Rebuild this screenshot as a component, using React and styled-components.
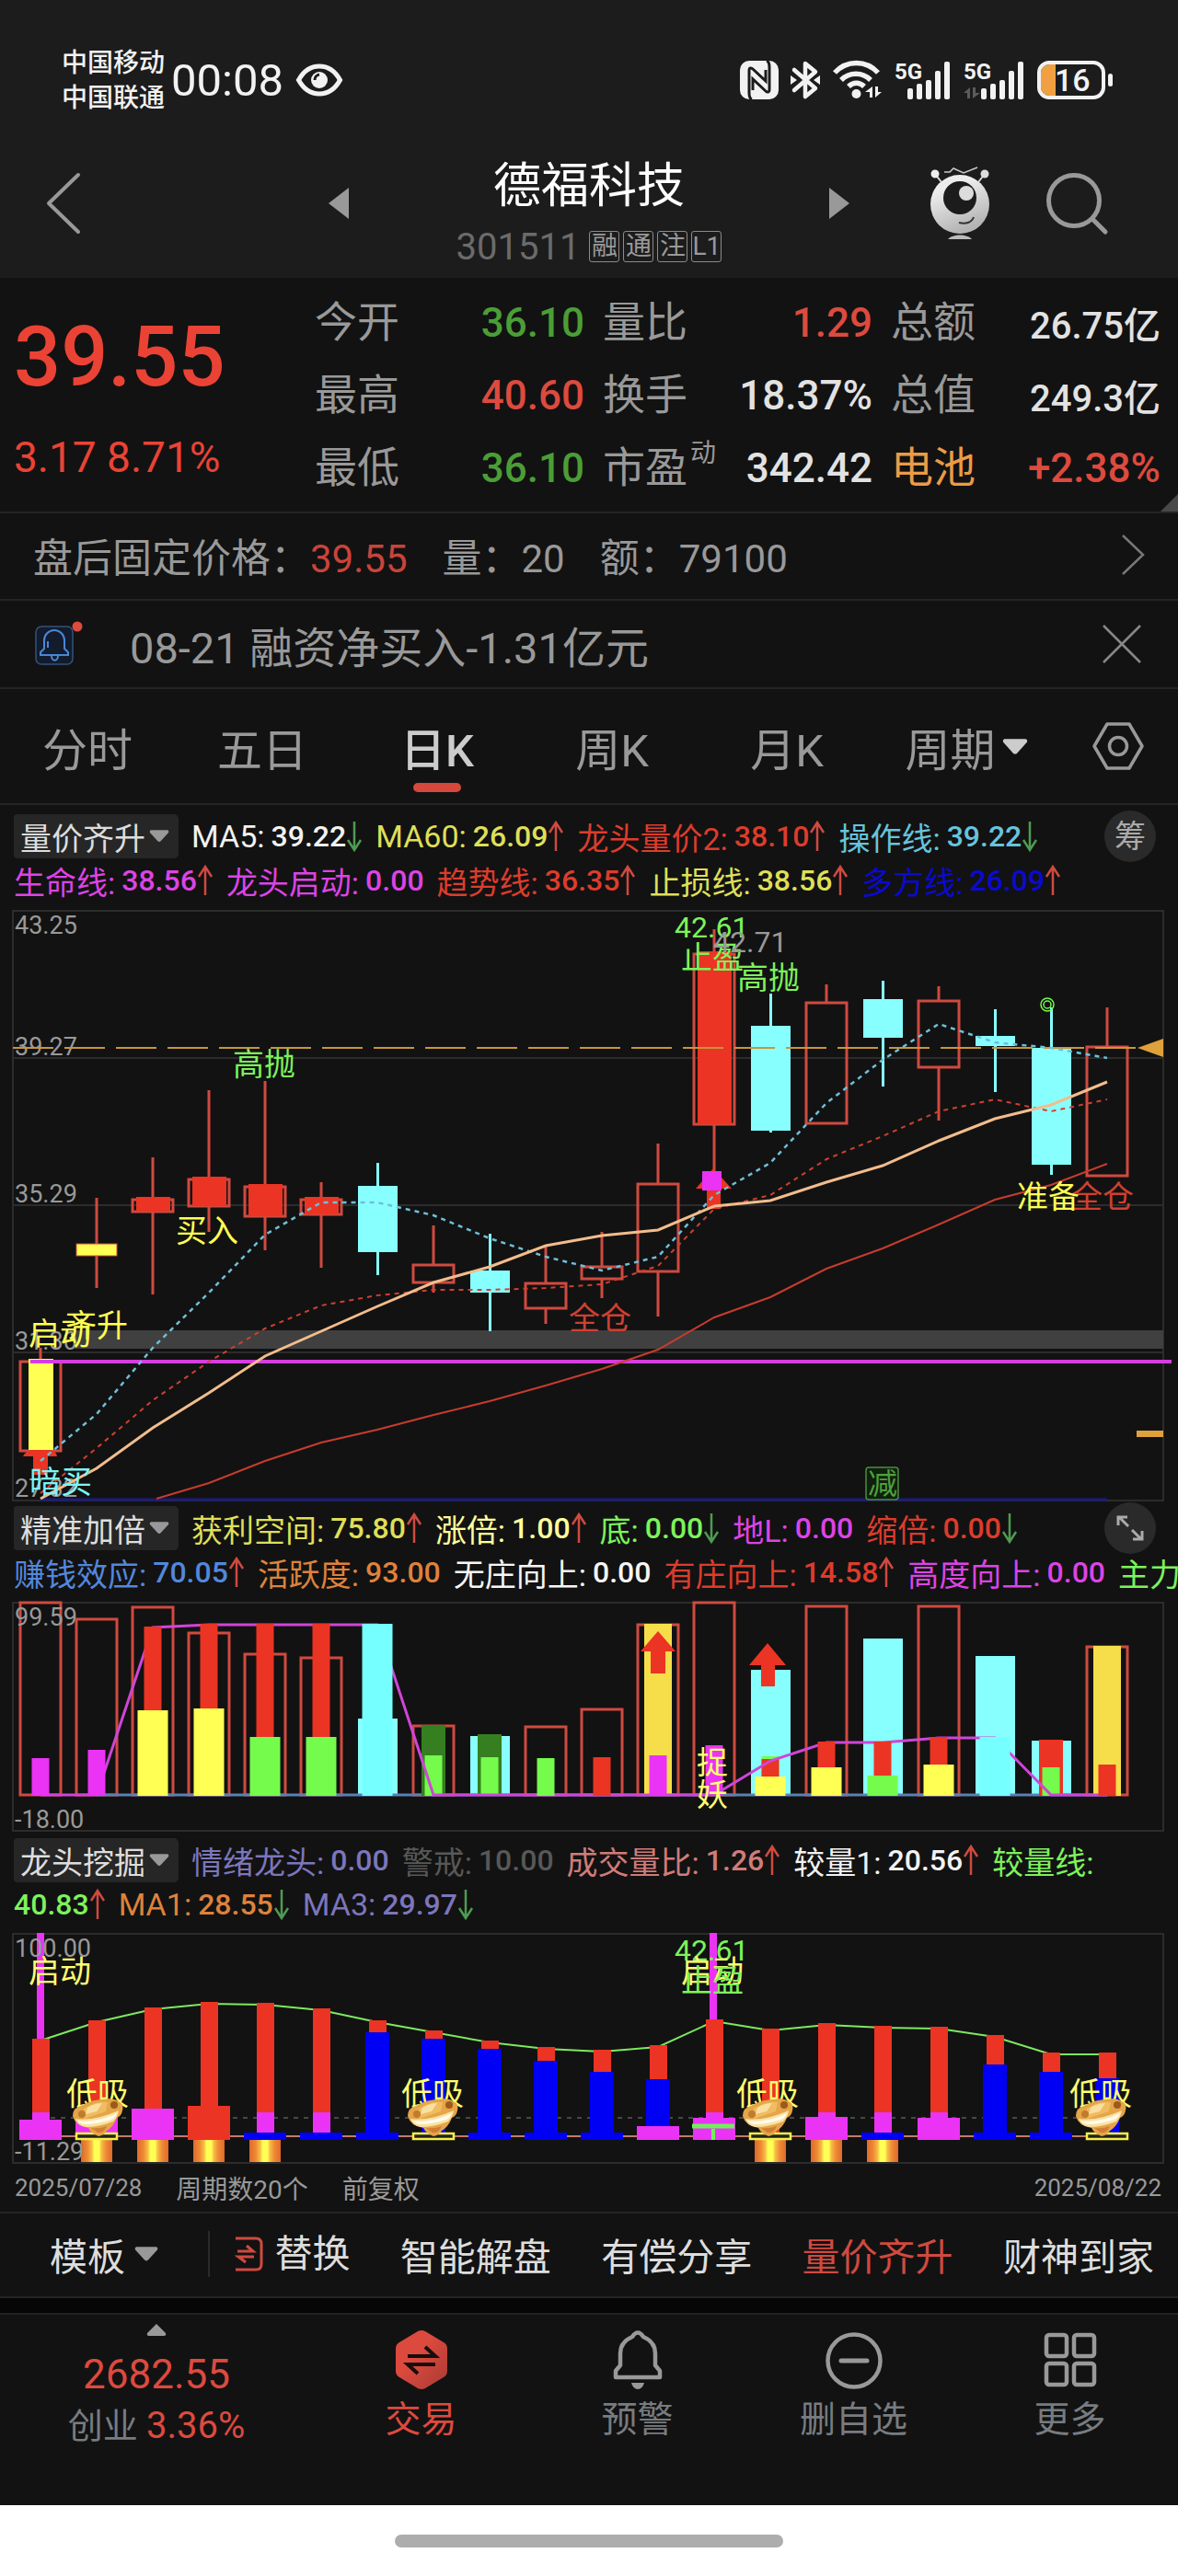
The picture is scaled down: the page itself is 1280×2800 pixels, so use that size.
import { useState } from 'react';
import styled, { createGlobalStyle } from 'styled-components';

const RED = '#dd4a3e';
const GREEN = '#4b9e36';
const GREY = '#999999';
const WHITE = '#e2e2e2';

const GlobalStyle = createGlobalStyle`
  * {
    box-sizing: border-box;
  }
  body {
    margin: 0;
    background: #ffffff;
    color: ${GREY};
    font-family: Roboto, 'Noto Sans CJK SC', sans-serif;
  }
  button {
    padding: 0;
    border: 0;
    background: none;
    color: inherit;
    font: inherit;
    cursor: pointer;
  }
  a {
    color: inherit;
    text-decoration: none;
  }
  svg {
    display: block;
    flex: none;
    overflow: visible;
  }
`;

/* ---------- data ---------- */

const quotes = [
  { label: '今开', value: '36.10', color: GREEN },
  { label: '量比', value: '1.29', color: RED },
  { label: '总额', value: '26.75亿', color: WHITE, small: true },
  { label: '最高', value: '40.60', color: RED },
  { label: '换手', value: '18.37%', color: WHITE },
  { label: '总值', value: '249.3亿', color: WHITE, small: true },
  { label: '最低', value: '36.10', color: GREEN },
  { label: '市盈', sup: '动', value: '342.42', color: WHITE },
  { label: '电池', value: '+2.38%', color: RED, labelColor: '#eb9b46' },
];

const tabs = ['分时', '五日', '日K', '周K', '月K'];

const mainRows = [
  [
    { name: 'MA5:', value: '39.22', color: '#f2f2f2', dir: 'down' },
    { name: 'MA60:', value: '26.09', color: '#dfdf58', dir: 'up' },
    { name: '龙头量价2:', value: '38.10', color: '#dd3c2c', dir: 'up' },
    { name: '操作线:', value: '39.22', color: '#67c3de', dir: 'down' },
  ],
  [
    { name: '生命线:', value: '38.56', color: '#dc44e4', dir: 'up' },
    { name: '龙头启动:', value: '0.00', color: '#dc44e4' },
    { name: '趋势线:', value: '36.35', color: '#dd3c2c', dir: 'up' },
    { name: '止损线:', value: '38.56', color: '#dfdf58', dir: 'up' },
    { name: '多方线:', value: '26.09', color: '#0a0ad0', dir: 'up' },
  ],
];

const doubleRows = [
  [
    { name: '获利空间:', value: '75.80', color: '#dfdf58', dir: 'up' },
    { name: '涨倍:', value: '1.00', color: '#ffff9c', dir: 'up' },
    { name: '底:', value: '0.00', color: '#7df35c', dir: 'down' },
    { name: '地L:', value: '0.00', color: '#dc44e4' },
    { name: '缩倍:', value: '0.00', color: '#dd3c2c', dir: 'down' },
  ],
  [
    { name: '赚钱效应:', value: '70.05', color: '#5387dc', dir: 'up' },
    { name: '活跃度:', value: '93.00', color: '#de823c' },
    { name: '无庄向上:', value: '0.00', color: '#f6f6f6' },
    { name: '有庄向上:', value: '14.58', color: '#dd3c2c', dir: 'up' },
    { name: '高度向上:', value: '0.00', color: '#dc44e4' },
    { name: '主力出', value: '', color: '#7df35c' },
  ],
];

const leaderRows = [
  [
    { name: '情绪龙头:', value: '0.00', color: '#7c76bc' },
    { name: '警戒:', value: '10.00', color: '#585858' },
    { name: '成交量比:', value: '1.26', color: '#d07c78', dir: 'up' },
    { name: '较量1:', value: '20.56', color: '#f2f2f2', dir: 'up' },
    { name: '较量线:', value: '', color: '#7df35c' },
  ],
  [
    { name: '', value: '40.83', color: '#7df35c', dir: 'up' },
    { name: 'MA1:', value: '28.55', color: '#de823c', dir: 'down' },
    { name: 'MA3:', value: '29.97', color: '#7c76bc', dir: 'down' },
  ],
];

// high, body top, body bottom, low, kind
const candles = [
  [486, 501, 598, 598, 'hollow'],
  [323, 373, 386, 421, 'yellow'],
  [279, 325, 338, 428, 'solid'],
  [206, 303, 332, 360, 'solid'],
  [196, 311, 343, 380, 'solid'],
  [306, 325, 341, 399, 'solid'],
  [285, 310, 382, 407, 'down'],
  [353, 396, 415, 426, 'hollow'],
  [362, 402, 426, 468, 'down'],
  [376, 416, 443, 460, 'hollow'],
  [360, 398, 411, 432, 'hollow'],
  [264, 308, 403, 452, 'hollow'],
  [31, 58, 243, 295, 'solid'],
  [101, 136, 250, 252, 'down'],
  [91, 111, 242, 242, 'hollow'],
  [87, 107, 149, 202, 'down'],
  [93, 109, 181, 239, 'hollow'],
  [118, 147, 158, 208, 'down'],
  [116, 160, 287, 298, 'down'],
  [116, 159, 299, 299, 'hollow'],
];

const ma5 = [609, 558, 486, 426, 363, 328, 328, 342, 367, 387, 402, 387, 320, 285, 220, 173, 134, 154, 160, 171];
const trend = [644, 595, 543, 501, 465, 440, 429, 423, 423, 421, 417, 397, 335, 320, 281, 256, 229, 216, 229, 216];
const stop = [650, 617, 573, 535, 495, 468, 441, 415, 398, 375, 364, 358, 332, 326, 306, 288, 261, 237, 222, 197];
const leader = [650, 633, 609, 589, 575, 559, 544, 527, 509, 488, 453, 431, 400, 378, 352, 325, 309, 286];

const STEP = 61;
const cx = (i) => 44 + i * STEP;
const toPoints = (values, from = 0) => values.map((y, i) => `${cx(i + from)},${y}`).join(' ');

const chartRed = '#cf4a40';
const fillRed = '#eb3423';
const magenta = '#ea33f5';
const lime = '#75fb4c';
const yellow = '#ffff54';
const cyan = '#88ffff';

const hollowBars = [[0, 9], [1, 27], [2, 14], [3, 42], [4, 65], [5, 69], [7, 143], [9, 144], [10, 125], [11, 33], [12, 9], [14, 13], [16, 13], [19, 57]];
const downBars = [[6, 135], [8, 154], [13, 82], [15, 48], [17, 67], [18, 159]];
// index, top, width, colour
const backBars = [
  [7, 142, 26, '#357f20'], [7, 175, 19, lime], [8, 152, 26, '#357f20'], [8, 177, 19, lime],
  [11, 32, 30, '#f5de4a'], [19, 56, 30, '#f5de4a'], [12, 164, 19, magenta],
  [18, 158, 26, fillRed], [18, 188, 19, lime], [13, 176, 19, lime], [13, 179, 19, fillRed],
];
const frontBars = [
  [0, 178, 19, magenta], [1, 169, 19, magenta], [11, 175, 19, magenta],
  [2, 35, 19, fillRed], [3, 32, 19, fillRed], [4, 32, 19, fillRed], [5, 32, 19, fillRed],
  [10, 177, 19, fillRed], [14, 160, 19, fillRed], [15, 160, 19, fillRed], [16, 155, 19, fillRed], [19, 185, 19, fillRed],
  [2, 126, 33, yellow], [3, 124, 33, yellow], [13, 198, 33, yellow], [14, 188, 33, yellow], [16, 185, 33, yellow],
  [4, 155, 33, lime], [5, 155, 33, lime], [15, 197, 33, lime],
  [6, 32, 33, '#76ffff'], [17, 155, 33, '#76ffff'], [9, 178, 19, lime],
];
const heightLine = [218, 218, 36, 33, 33, 33, 33, 218, 218, 218, 218, 218, 218, 181, 161, 161, 156, 156, 218, 218];

const strength = [122, 102, 88, 82, 83, 89, 102, 113, 124, 131, 134, 129, 101, 111, 105, 108, 109, 118, 137, 137];
const blueBars = [[6, 115], [7, 122], [8, 133], [9, 146], [10, 158], [11, 166], [17, 150], [18, 158], [19, 165]];
const smallPinks = [0, 4, 5, 12, 14, 15, 16];
const baseBoxes = [
  [0, 210, magenta], [1, 203, magenta], [2, 198, magenta], [3, 195, fillRed], [11, 217, magenta],
  [12, 208, magenta], [14, 207, magenta], [16, 208, magenta],
  [4, 224, '#0000f5'], [5, 224, '#0000f5'], [6, 224, '#0000f5'], [8, 224, '#0000f5'], [9, 224, '#0000f5'],
  [10, 224, '#0000f5'], [15, 224, '#0000f5'], [17, 224, '#0000f5'], [18, 224, '#0000f5'],
];
const flames = [1, 2, 3, 4, 13, 14, 15];
const bulls = [1, 7, 13, 19];

/* ---------- small drawings ---------- */

const EyeIcon = () => (
  <svg width="50" height="36" viewBox="0 0 50 36">
    <path d="M2.500 18C8 8 16 3 25 3s17 5 22.500 15C42 28 34 33 25 33S8 28 2.500 18z" fill="none" stroke="#f2f2f2" strokeWidth="5" />
    <circle cx="25" cy="18" r="9" fill="#f2f2f2" />
    <path d="M20 18a6 6 0 0 1 5-6" fill="none" stroke="#1c1c1c" strokeWidth="3" />
  </svg>
);

const NfcIcon = () => (
  <svg width="42" height="42" viewBox="0 0 42 42">
    <rect x="0" y="0" width="42" height="42" rx="10" fill="#f2f2f2" />
    <path d="M13 42c-3-1-3-4-3-7V10c0-2 2-3 4-1l14 13V10M29 0c3 1 3 4 3 7v25c0 2-2 3-4 1L14 20v12" fill="none" stroke="#1c1c1c" strokeWidth="3" />
  </svg>
);

const BluetoothIcon = () => (
  <svg width="33" height="42" viewBox="0 0 33 42">
    <path d="M4 10l23 20-11 9V3l11 9L4 32" fill="none" stroke="#f2f2f2" strokeWidth="4.500" strokeLinejoin="round" strokeLinecap="round" />
    <path d="M0 16l7 5-7 5zM32 16l-7 5 7 5z" fill="#f2f2f2" />
  </svg>
);

const WifiIcon = () => (
  <svg width="54" height="42" viewBox="0 0 54 42">
    <g fill="none" stroke="#f2f2f2" strokeWidth="5.500">
      <path d="M2 13C15-1 36-1 49 13" />
      <path d="M9 21c9-9 23-9 32 0" />
      <path d="M17 28c5-5 12-5 17 0" />
    </g>
    <circle cx="25.500" cy="36" r="5" fill="#f2f2f2" />
    <path d="M43 28v12h-3v-6h-5zM46 40V28h3v6h4z" fill="#f2f2f2" />
  </svg>
);

const SignalIcon = ({ shift = 0, idle }) => (
  <svg width={62 + shift} height="42" viewBox={`0 0 ${62 + shift} 42`}>
    <text x="0" y="20" fontSize="24" fontWeight="700" fill="#f2f2f2">5G</text>
    {idle && <path d="M7 29v12H4v-6H0zM10 41V29h3v6h5z" fill="#5c5c5c" />}
    {[12, 17, 21, 31, 41].map((h, i) => (
      <rect key={h} x={14 + shift + i * 10} y={42 - h} width="6" height={h} rx="2" fill="#f2f2f2" />
    ))}
  </svg>
);

const BatteryIcon = () => (
  <svg width="84" height="42" viewBox="0 0 84 42">
    <path d="M20 4H13a9 9 0 0 0-9 9v16a9 9 0 0 0 9 9h7z" fill="#f0a040" />
    <rect x="2" y="2" width="70" height="38" rx="11" fill="none" stroke="#f2f2f2" strokeWidth="4" />
    <rect x="77" y="14" width="5" height="14" rx="2.500" fill="#f2f2f2" />
    <text x="19" y="33" fontSize="34" fontWeight="500" fill="#f2f2f2">16</text>
  </svg>
);

const BackIcon = () => (
  <svg width="38" height="66" viewBox="0 0 38 66">
    <path d="M35 2L3 33l32 31" fill="none" stroke="#999" strokeWidth="4" strokeLinecap="round" strokeLinejoin="round" />
  </svg>
);

const MascotIcon = () => (
  <svg width="66" height="80" viewBox="0 0 66 80">
    <defs>
      <linearGradient id="mascot" x1="0" y1="0" x2="0.400" y2="1">
        <stop offset="0.300" stopColor="#ececec" />
        <stop offset="1" stopColor="#b4b4b4" />
      </linearGradient>
    </defs>
    <path d="M15 6h6l4-4 11 5 15-6" fill="none" stroke="#c8c8c8" strokeWidth="1.500" />
    <path d="M5 8l7 9M59 8l-7 9" stroke="#d8d8d8" strokeWidth="2" />
    <circle cx="5" cy="8" r="4.500" fill="#eee" />
    <circle cx="59" cy="8" r="4.500" fill="#ddd" />
    <circle cx="32" cy="41" r="32" fill="url(#mascot)" />
    <circle cx="32" cy="34" r="18" fill="#1c1c1c" />
    <circle cx="39" cy="29" r="8" fill="#dcdcdc" />
    <path d="M31 61c7 2 14 0 16-6" fill="none" stroke="#333" strokeWidth="2" />
    <path d="M19 79c5-6 21-6 26 0z" fill="#bbb" />
  </svg>
);

const SearchIcon = () => (
  <svg width="68" height="68" viewBox="0 0 68 68">
    <circle cx="30" cy="31" r="27.500" fill="none" stroke="#999" strokeWidth="5" />
    <path d="M50 51l14 14" stroke="#999" strokeWidth="5" strokeLinecap="round" />
  </svg>
);

const BellBadgeIcon = () => (
  <svg width="54" height="50" viewBox="0 0 54 50">
    <rect x="1" y="6" width="40" height="41" rx="6" fill="#131c2c" stroke="#33517c" strokeWidth="1.500" />
    <path d="M6 37v-3l4-4v-9a11 11 0 0 1 22 0v9l4 4v3zM18 38a3 4 0 0 0 7 0M14 29v-7" fill="none" stroke="#4a86d8" strokeWidth="2" />
    <circle cx="46" cy="6" r="5.500" fill="#dd4a3e" />
  </svg>
);

const ArrowIcon = ({ dir }) => (
  <svg width="18" height="34" viewBox="0 0 18 34">
    {dir === 'up' ? (
      <path d="M9 33V2M2 13l7-11 7 11" fill="none" stroke="#cf4a40" strokeWidth="2.500" />
    ) : (
      <path d="M9 1v31M2 21l7 11 7-11" fill="none" stroke="#4f9b52" strokeWidth="2.500" />
    )}
  </svg>
);

const Caret = ({ size = 24, color = GREY }) => (
  <svg width={size} height={size * 0.6} viewBox="0 0 24 14">
    <path d="M2 0h20q2 1 1 3l-9 10q-2 2-4 0L1 3Q0 1 2 0z" fill={color} />
  </svg>
);

const TradeIcon = () => (
  <svg width="58" height="66" viewBox="0 0 58 66">
    <defs>
      <linearGradient id="trade" x1="0" y1="0" x2="1" y2="1">
        <stop offset="0.400" stopColor="#dc4a3e" />
        <stop offset="1" stopColor="#a83a34" />
      </linearGradient>
    </defs>
    <path d="M25 2q4-2 8 0l20 12q4 2 4 7v24q0 5-4 7L33 64q-4 2-8 0L5 52q-4-2-4-7V21q0-5 4-7z" fill="url(#trade)" />
    <path d="M14 29h30L33 19M44 38H14l11 10" fill="none" stroke="#1a0c0c" strokeWidth="4" />
  </svg>
);

const BellIcon = () => (
  <svg width="54" height="66" viewBox="0 0 54 66">
    <path d="M3 52v-7l5-6V26c0-9 6-15 13-18q6-9 12 0c7 3 13 9 13 18v13l5 6v7z" fill="none" stroke="#999" strokeWidth="4.500" strokeLinejoin="round" />
    <path d="M20 58h14q-2 7-7 7t-7-7z" fill="#999" />
  </svg>
);

const MinusIcon = () => (
  <svg width="62" height="66" viewBox="0 0 62 66">
    <circle cx="31" cy="34" r="28.500" fill="none" stroke="#999" strokeWidth="4.500" />
    <path d="M17 34h28" stroke="#999" strokeWidth="5" strokeLinecap="round" />
  </svg>
);

const GridIcon = () => (
  <svg width="58" height="66" viewBox="0 0 58 66" fill="none" stroke="#999" strokeWidth="4.500">
    <rect x="3" y="6" width="22" height="23" rx="3" />
    <rect x="33" y="6" width="22" height="23" rx="3" />
    <rect x="3" y="37" width="22" height="23" rx="3" />
    <rect x="33" y="37" width="22" height="23" rx="3" />
  </svg>
);

const SwapIcon = () => (
  <svg width="30" height="38" viewBox="0 0 30 38" fill="none" stroke="#cf4a40" strokeWidth="3">
    <path d="M0 2h22q6 0 6 6v22q0 6-6 6H0M2 16h17l-7-6M20 22H3l8 6" />
  </svg>
);

/* ---------- charts ---------- */

const Label = ({ x, y, color, size = 34, children }) => (
  <text x={x} y={y} fontSize={size} fill={color}>{children}</text>
);

const Candle = ({ i, data }) => {
  const [high, top, bottom, low, kind] = data;
  const x = cx(i);
  if (kind === 'down') {
    return (
      <g fill={cyan}>
        <rect x={x - 1} y={high} width="3" height={low - high} />
        <rect x={x - 21} y={top} width="43" height={bottom - top} />
      </g>
    );
  }
  return (
    <g>
      <path d={`M${x} ${high}V${top}M${x} ${bottom}V${low}`} stroke={chartRed} strokeWidth="3" />
      <rect x={x - 22} y={top} width="44" height={bottom - top} fill={kind === 'yellow' ? yellow : 'none'} stroke={chartRed} strokeWidth={kind === 'yellow' ? 1 : 3} />
      {kind === 'solid' && <rect x={x - 18} y={top - 3} width="37" height={bottom - top + 3} fill={fillRed} />}
    </g>
  );
};

const CandleChart = () => (
  <Chart viewBox="0 2 1280 656" role="img" aria-label="日K">
    <g fill="none" stroke="#2c2c2c" strokeWidth="2">
      <rect x="14" y="11" width="1250" height="641" />
      <path d="M14 171H1264M14 331H1264M14 491H1264" />
    </g>
    <rect x="80" y="467" width="1184" height="20" fill="#404040" />
    <path d="M44 651H1203" stroke="#1b1b7c" strokeWidth="3" />
    {['43.25', '39.27', '35.29', '31.30', '27.32'].map((t, i) => (
      <Label key={t} x="16" y={[36, 168, 328, 488, 648][i]} size={27} color={GREY}>{t}</Label>
    ))}
    {candles.map((c, i) => <Candle key={i} i={i} data={c} />)}
    <path d="M14 160H1234" stroke="#c8963a" strokeWidth="2" strokeDasharray="44 12" />
    <path d="M1236 160l28-10v20z" fill="#dfa13c" />
    <rect x="1235" y="576" width="29" height="7" fill="#dfa13c" />
    <path d="M25 604q2-6 12-7h15q10 1 10 7H52v20H36v-20z" fill={fillRed} />
    <rect x="31" y="498" width="27" height="99" fill={yellow} />
    <path d="M775 291l20 22h-12v22h-15v-22h-12z" fill={fillRed} />
    <rect x="763" y="294" width="21" height="21" fill={magenta} />
    <path d="M33 501H1273" stroke="#d63de0" strokeWidth="4" />
    <g fill="none">
      <polyline points={toPoints(trend)} stroke="#cf4030" strokeWidth="2" strokeDasharray="5 5" />
      <polyline points={toPoints(ma5)} stroke="#6fbfd8" strokeWidth="2.500" strokeDasharray="5 5" />
      <polyline points={`170,650 ${toPoints(leader.slice(1), 3)}`} stroke="#c73c2e" strokeWidth="2" />
      <polyline points={toPoints(stop)} stroke="#f2bd8c" strokeWidth="3" />
      <circle cx="1138" cy="113" r="7" stroke={lime} strokeWidth="1.500" />
      <circle cx="1138" cy="113" r="4" stroke={lime} strokeWidth="1.500" />
    </g>
    <Label x={31} y={483} color={yellow}>启动</Label>
    <Label x={71} y={474} color={yellow}>齐升</Label>
    <Label x={32} y={644} color="#7cf5f5">暗买</Label>
    <Label x={191} y={371} color={yellow}>买入</Label>
    <Label x={253} y={190} color="#7df35c">高抛</Label>
    <Label x={618} y={466} color="#cf4030">全仓</Label>
    <Label x={733} y={40} size={32} color="#7df35c">42.61</Label>
    <Label x={740} y={74} color="#7df35c">止盈</Label>
    <Label x={775} y={56} size={32} color={GREY}>42.71</Label>
    <Label x={801} y={96} color="#7df35c">高抛</Label>
    <Label x={1164} y={334} color="#cf4030">全仓</Label>
    <Label x={1105} y={334} color={yellow}>准备</Label>
    <rect x="941" y="616" width="35" height="35" rx="3" fill="#10200e" stroke="#4b8f40" strokeWidth="1.500" />
    <Label x={943} y={645} size={32} color="#4fa03c">减</Label>
  </Chart>
);

const DoubleChart = () => (
  <Chart viewBox="0 0 1280 265" role="img" aria-label="精准加倍">
    <rect x="14" y="9" width="1250" height="248" fill="none" stroke="#2c2c2c" strokeWidth="2" />
    {hollowBars.map(([i, y]) => (
      <rect key={i} x={cx(i) - 22} y={y} width="44" height={218 - y} fill="none" stroke={chartRed} strokeWidth="3" />
    ))}
    {downBars.map(([i, y]) => <rect key={i} x={cx(i) - 21} y={y} width="43" height={218 - y} fill={cyan} />)}
    <path d="M105 218H1203" stroke="#5a80b4" strokeWidth="3" />
    {backBars.map(([i, y, w, fill]) => (
      <rect key={`${i}-${y}`} x={cx(i) - w / 2} y={y} width={w} height={219 - y} fill={fill} />
    ))}
    <polyline points={toPoints(heightLine)} fill="none" stroke="#cf45d8" strokeWidth="3" />
    {frontBars.map(([i, y, w, fill]) => (
      <rect key={`${i}-${y}`} x={cx(i) - w / 2} y={y} width={w} height={219 - y} fill={fill} />
    ))}
    <path d="M715 40l19 22h-11v24h-16v-24h-11zM834 53l20 24h-12v23h-15v-23h-13z" fill={fillRed} />
    <Label x={16} y={34} size={27} color={GREY}>99.59</Label>
    <Label x={16} y={254} size={27} color={GREY}>-18.00</Label>
    <Label x={757} y={195} color="#ffff70">捉</Label>
    <Label x={757} y={230} color="#ffff70">妖</Label>
  </Chart>
);

const Bull = ({ x }) => (
  <g transform={`translate(${x} 187)`}>
    <path d="M0 19q0-9 9-11 12-7 24-7 11-2 16 2 7 2 5 10-1 6-6 8-4 10-11 14-3 5-9 6-8-3-11-9Q3 30 0 19z" fill="#e5a548" />
    <path d="M12 11q14-9 26-7l-2 10-24 8z" fill="#f0bc62" />
    <path d="M16 10q8-5 16-5l-6 9-12 3z" fill="#fae0a0" />
    <path d="M3 22q20 3 47-9-1 7-6 12-16 6-30 6-9-2-11-9z" fill="#fbe2a2" />
    <path d="M5 24q20 3 43-8-2 5-6 7-16 5-29 5-6-1-8-4z" fill="#fffbee" />
    <path d="M20 32q9 1 17-2-3 8-10 7z" fill="#cf7f34" />
    <circle cx="10" cy="17" r="4" fill="#c07c2c" />
    <circle cx="45" cy="7" r="4" fill="#9c5a1c" />
  </g>
);

const LeaderChart = () => (
  <Chart viewBox="0 0 1280 260" role="img" aria-label="龙头挖掘">
    <defs>
      <linearGradient id="flame">
        <stop offset="0" stopColor="#e0682c" />
        <stop offset="0.200" stopColor="#ee8a34" />
        <stop offset="0.350" stopColor="#f8c048" />
        <stop offset="0.420" stopColor="#ffff54" />
        <stop offset="0.580" stopColor="#ffff54" />
        <stop offset="0.650" stopColor="#f8c048" />
        <stop offset="0.800" stopColor="#ee8a34" />
        <stop offset="1" stopColor="#e0682c" />
      </linearGradient>
    </defs>
    <rect x="14" y="8" width="1250" height="249" fill="none" stroke="#2c2c2c" strokeWidth="2" />
    <path d="M44 208H1203" stroke="#484848" strokeWidth="2" strokeDasharray="5 6" />
    <path d="M44 228H1203" stroke="#c47a6a" strokeWidth="2" />
    <polyline points={toPoints(strength.map((y) => y + 2))} fill="none" stroke="#7ee860" strokeWidth="2" />
    <path d="M44 7V122M775 7V101" stroke={magenta} strokeWidth="8" />
    {strength.map((y, i) => <rect key={i} x={cx(i) - 9} y={y} width="19" height={224 - y} fill={fillRed} />)}
    {smallPinks.map((i) => <rect key={i} x={cx(i) - 9} y="202" width="19" height="22" fill={magenta} />)}
    {blueBars.map(([i, y]) => <rect key={i} x={cx(i) - 13} y={y} width="26" height={225 - y} fill="#0000f5" />)}
    {baseBoxes.map(([i, y, fill]) => <rect key={i} x={cx(i) - 23} y={y} width="46" height={232 - y} fill={fill} />)}
    {flames.map((i) => <rect key={i} x={cx(i) - 17} y="232" width="34" height="24" fill="url(#flame)" />)}
    <path d="M752 217h46" stroke="#6ff05a" strokeWidth="5" />
    <path d="M775 220v12" stroke="#6ff05a" strokeWidth="4" />
    {bulls.map((i) => (
      <rect key={i} x={cx(i) - 22} y="225" width="44" height="6" fill="#222" stroke="#f5f04a" strokeWidth="2.500" />
    ))}
    <Label x={16} y={33} size={27} color={GREY}>100.00</Label>
    <Label x={16} y={254} size={27} color={GREY}>-11.29</Label>
    <Label x={31} y={61} color="#ffff70">启动</Label>
    <Label x={733} y={37} size={32} color="#7df35c">42.61</Label>
    <Label x={740} y={61} color="#ffff70">启动</Label>
    <Label x={740} y={71} color="#7df35c">止盈</Label>
    {[72, 436, 800, 1162].map((x) => (
      <g key={x}>
        <Label x={x} y={194} color="#ffff70">低吸</Label>
        <Bull x={x + 7} />
      </g>
    ))}
  </Chart>
);

const Legend = ({ title, rows, action }) => (
  <LegendBox>
    {rows.map((items, r) => (
      <LegendRow key={r}>
        {r === 0 && <Chip type="button">{title}<Caret size={22} /></Chip>}
        {items.map((item, n) => (
          <LegendItem key={n} $color={item.color}>
            {item.name && <span>{item.name}</span>}
            {item.value && <b>{item.value}</b>}
            {item.dir && <ArrowIcon dir={item.dir} />}
          </LegendItem>
        ))}
        {r === 0 && action}
      </LegendRow>
    ))}
  </LegendBox>
);

function App() {
  const [tab, setTab] = useState('日K');

  return (
    <Page>
      <GlobalStyle />
      <Header>
        <StatusBar>
          <Carriers><span>中国移动</span><span>中国联通</span></Carriers>
          <Clock>00:08</Clock>
          <EyeIcon />
          <StatusIcons>
            <NfcIcon />
            <BluetoothIcon />
            <WifiIcon />
            <SignalIcon />
            <SignalIcon shift={5} idle />
            <BatteryIcon />
          </StatusIcons>
        </StatusBar>
        <TitleBar>
          <BackButton type="button" aria-label="返回"><BackIcon /></BackButton>
          <Switcher>
            <button type="button" aria-label="上一只">
              <svg width="22" height="34" viewBox="0 0 22 34"><path d="M0 17L22 0v34z" fill="#999" /></svg>
            </button>
            <StockTitle>
              <h1>德福科技</h1>
              <StockCode>
                301511
                <Tag>融</Tag><Tag>通</Tag><Tag>注</Tag><Tag>L1</Tag>
              </StockCode>
            </StockTitle>
            <button type="button" aria-label="下一只">
              <svg width="22" height="34" viewBox="0 0 22 34"><path d="M22 17L0 0v34z" fill="#999" /></svg>
            </button>
          </Switcher>
          <TitleActions>
            <button type="button" aria-label="助手"><MascotIcon /></button>
            <button type="button" aria-label="搜索"><SearchIcon /></button>
          </TitleActions>
        </TitleBar>
      </Header>

      <QuotePanel>
        <PriceBox>
          <Price>39.55</Price>
          <Change>3.17 8.71%</Change>
        </PriceBox>
        <QuoteGrid>
          {quotes.map((q) => (
            <Quote key={q.label}>
              <QuoteLabel $color={q.labelColor}>{q.label}{q.sup && <sup>{q.sup}</sup>}</QuoteLabel>
              <QuoteValue $color={q.color} $small={q.small}>{q.value}</QuoteValue>
            </Quote>
          ))}
        </QuoteGrid>
      </QuotePanel>

      <FixedPrice href="#fixed">
        <span>盘后固定价格：<em>39.55</em></span>
        <span>量：<i>20</i></span>
        <span>额：<i>79100</i></span>
        <svg width="26" height="46" viewBox="0 0 26 46">
          <path d="M2 2l22 21L2 44" fill="none" stroke="#777" strokeWidth="2.500" />
        </svg>
      </FixedPrice>

      <Notice>
        <BellBadgeIcon />
        <p>08-21 融资净买入-1.31亿元</p>
        <button type="button" aria-label="关闭">
          <svg width="42" height="42" viewBox="0 0 42 42">
            <path d="M1 1l40 40M41 1L1 41" stroke="#888" strokeWidth="2.500" />
          </svg>
        </button>
      </Notice>

      <Tabs>
        {tabs.map((t) => (
          <Tab key={t} type="button" $active={t === tab} onClick={() => setTab(t)}>{t}</Tab>
        ))}
        <Tab type="button">周期<Caret size={28} color="#cccccc" /></Tab>
        <Tab type="button" aria-label="设置">
          <svg width="56" height="52" viewBox="0 0 56 52" fill="none" stroke="#999" strokeWidth="3.500">
            <path d="M16 2h24l14 24-14 24H16L2 26z" strokeLinejoin="round" />
            <circle cx="28" cy="26" r="9.500" />
          </svg>
        </Tab>
      </Tabs>

      <Legend title="量价齐升" rows={mainRows} action={<RoundButton type="button">筹</RoundButton>} />
      <CandleChart />
      <Legend
        title="精准加倍"
        rows={doubleRows}
        action={(
          <RoundButton type="button" aria-label="展开">
            <svg width="28" height="28" viewBox="0 0 28 28" fill="none" stroke="#aaa" strokeWidth="3">
              <path d="M12 12L2 2M1 11V2h10M16 16l10 10M27 17v9H17" />
            </svg>
          </RoundButton>
        )}
      />
      <DoubleChart />
      <Legend title="龙头挖掘" rows={leaderRows} />
      <LeaderChart />
      <DateRow>
        <time>2025/07/28</time>
        <span>周期数20个</span>
        <span>前复权</span>
        <time>2025/08/22</time>
      </DateRow>

      <Templates>
        <TemplateMenu type="button">模板<Caret size={26} /></TemplateMenu>
        <SwapButton type="button"><SwapIcon />替换</SwapButton>
        <button type="button">智能解盘</button>
        <button type="button">有偿分享</button>
        <ActiveTemplate type="button">量价齐升</ActiveTemplate>
        <button type="button">财神到家</button>
      </Templates>

      <BottomNav>
        <IndexLink href="#index">
          <svg width="22" height="13" viewBox="0 0 22 13"><path d="M11 0l10 10q1 3-2 3H3q-3 0-2-3z" fill="#999" /></svg>
          <strong>2682.55</strong>
          <span>创业 <em>3.36%</em></span>
        </IndexLink>
        <NavLink href="#trade" $active><TradeIcon />交易</NavLink>
        <NavLink href="#alert"><BellIcon />预警</NavLink>
        <NavLink href="#remove"><MinusIcon />删自选</NavLink>
        <NavLink href="#more"><GridIcon />更多</NavLink>
      </BottomNav>
      <HomeBar><span /></HomeBar>
    </Page>
  );
}

/* ---------- styles ---------- */

const Page = styled.main`
  background: #121212;
  overflow-x: clip;
`;

const Header = styled.header`
  background: #1c1c1c;
`;

const StatusBar = styled.div`
  display: flex;
  align-items: center;
  height: 140px;
  padding: 34px 69px 0 67px;
  color: #f2f2f2;
`;

const Carriers = styled.div`
  display: flex;
  flex-direction: column;
  padding-top: 2px;
  font-size: 28px;
  font-weight: 500;
  line-height: 38px;
`;

const Clock = styled.time`
  margin: 0 14px 0 7px;
  font-size: 49px;
`;

const StatusIcons = styled.div`
  display: flex;
  gap: 13px;
  margin-left: auto;
`;

const TitleBar = styled.div`
  display: grid;
  grid-template-columns: 1fr 566px 1fr;
  align-items: center;
  height: 162px;
`;

const BackButton = styled.button`
  justify-self: start;
  margin-left: 50px;
`;

const Switcher = styled.div`
  display: flex;
  align-items: center;
  justify-content: space-between;
`;

const StockTitle = styled.div`
  h1 {
    margin: 0;
    color: #ffffff;
    font-size: 52px;
    font-weight: 400;
    line-height: 94px;
    text-align: center;
  }
`;

const StockCode = styled.div`
  display: flex;
  align-items: center;
  gap: 4px;
  height: 36px;
  color: #6b6b6b;
  font-size: 40px;
`;

const Tag = styled.span`
  width: 33px;
  height: 34px;
  border: 1px solid #8a8a8a;
  border-radius: 3px;
  color: ${GREY};
  font-size: 28px;
  line-height: 32px;
  text-align: center;

  &:first-of-type {
    margin-left: 6px;
  }
`;

const TitleActions = styled.div`
  display: flex;
  align-items: center;
  justify-content: flex-end;
  gap: 60px;
  padding-right: 75px;
`;

const QuotePanel = styled.section`
  position: relative;
  display: flex;
  padding: 9px 19px 8px 15px;
  border-bottom: 2px solid #242424;

  &::after {
    content: '';
    position: absolute;
    right: 0;
    bottom: 0;
    border-right: 19px solid #484848;
    border-top: 19px solid transparent;
  }
`;

const PriceBox = styled.div`
  flex: 0 0 327px;
  color: #ea4335;
`;

const Price = styled.div`
  padding-top: 18px;
  font-size: 90px;
  font-weight: 500;
  line-height: 120px;
`;

const Change = styled.div`
  font-size: 46px;
  line-height: 96px;
`;

const QuoteGrid = styled.dl`
  display: grid;
  grid-template-columns: repeat(3, 1fr);
  column-gap: 20px;
  flex: 1;
  margin: 0;
`;

const Quote = styled.div`
  display: flex;
  align-items: center;
  justify-content: space-between;
  height: 79px;
`;

const QuoteLabel = styled.dt`
  color: ${(p) => p.$color || GREY};
  font-size: 46px;
  line-height: 79px;
  white-space: nowrap;

  sup {
    margin-left: 3px;
    font-size: 28px;
    line-height: 1;
    vertical-align: 22px;
  }
`;

const QuoteValue = styled.dd`
  margin: 0;
  color: ${(p) => p.$color};
  font-size: ${(p) => (p.$small ? 40 : 44)}px;
  font-weight: 500;
`;

const FixedPrice = styled.a`
  display: flex;
  align-items: center;
  gap: 38px;
  height: 95px;
  padding: 0 36px 4px;
  border-bottom: 2px solid #242424;
  font-size: 43px;

  em,
  i {
    font-size: 42px;
    font-style: normal;
  }
  em {
    color: #c9443a;
  }
  svg {
    margin-left: auto;
  }
`;

const Notice = styled.section`
  display: flex;
  align-items: center;
  height: 96px;
  padding: 0 40px 0 38px;
  border-bottom: 2px solid #242424;
  font-size: 47px;

  p {
    flex: 1;
    margin: 0 0 0 49px;
  }
`;

const Tabs = styled.nav`
  display: grid;
  grid-template-columns: repeat(5, 19fr) 20fr 13fr;
  height: 126px;
  border-bottom: 2px solid #242424;
`;

const Tab = styled.button`
  position: relative;
  display: flex;
  align-items: center;
  justify-content: center;
  gap: 7px;
  color: ${(p) => (p.$active ? '#cccccc' : GREY)};
  font-size: 49px;
  font-weight: ${(p) => (p.$active ? 500 : 400)};

  &::after {
    content: '';
    display: ${(p) => (p.$active ? 'block' : 'none')};
    position: absolute;
    bottom: 12px;
    width: 52px;
    height: 10px;
    border-radius: 5px;
    background: #d6473c;
  }
`;

const LegendBox = styled.div`
  padding-left: 15px;
`;

const LegendRow = styled.div`
  display: flex;
  align-items: center;
  gap: 14px;
  height: 48px;
  overflow-x: clip;

  ${Page} > nav + div > &:first-child {
    margin-top: 10px;
  }
`;

const Chip = styled.button`
  display: flex;
  align-items: center;
  gap: 4px;
  height: 48px;
  margin-left: -1px;
  padding: 0 10px 0 8px;
  border-radius: 5px;
  background: #262626;
  color: #dddddd;
  font-size: 34px;
  white-space: nowrap;
`;

const LegendItem = styled.span`
  display: flex;
  flex: none;
  align-items: center;
  color: ${(p) => p.$color};
  font-size: 34px;
  white-space: nowrap;

  span + b {
    margin-left: 7px;
  }
  b {
    font-size: 32px;
    font-weight: 500;
  }
`;

const RoundButton = styled.button`
  display: grid;
  flex: none;
  place-items: center;
  width: 56px;
  height: 56px;
  margin: 0 24px 0 auto;
  border-radius: 50%;
  background: #2a2a2a;
  color: #aaaaaa;
  font-size: 34px;
  line-height: 56px;
`;

const Chart = styled.svg`
  width: 100%;
  height: auto;
`;

const DateRow = styled.div`
  display: flex;
  align-items: center;
  gap: 37px;
  height: 52px;
  padding: 0 18px 2px 16px;
  border-bottom: 2px solid #242424;
  font-size: 28px;

  time {
    font-size: 26px;
  }
  time:last-child {
    margin-left: auto;
  }
`;

const Templates = styled.div`
  display: flex;
  align-items: center;
  justify-content: space-between;
  height: 92px;
  padding: 0 26px 2px 54px;
  border-bottom: 2px solid #242424;
  color: #dddddd;
  font-size: 41px;
`;

const TemplateMenu = styled.button`
  display: flex;
  align-items: center;
  gap: 10px;
`;

const SwapButton = styled.button`
  display: flex;
  align-items: center;
  gap: 12px;
  padding-left: 28px;
  border-left: 2px solid #2a2a2a;
  line-height: 50px;
`;

const ActiveTemplate = styled.button`
  color: #cf4a40;
`;

const BottomNav = styled.nav`
  display: grid;
  grid-template-columns: 340fr repeat(4, 235fr);
  height: 225px;
  border-top: 16px solid #060606;
`;

const NavLink = styled.a`
  display: flex;
  flex-direction: column;
  align-items: center;
  padding-top: 16px;
  border-top: 2px solid #222222;
  color: ${(p) => (p.$active ? RED : '#777c80')};
  font-size: 39px;
`;

const IndexLink = styled.a`
  display: flex;
  flex-direction: column;
  align-items: center;
  padding-top: 10px;
  border-top: 2px solid #222222;
  color: #777c80;
  font-size: 38px;
  line-height: 56px;

  strong {
    margin-top: 14px;
    color: ${RED};
    font-size: 44px;
    font-weight: 400;
  }
  em {
    color: ${RED};
    font-size: 40px;
    font-style: normal;
  }
`;

const HomeBar = styled.footer`
  display: flex;
  align-items: center;
  justify-content: center;
  height: 78px;
  background: #ffffff;

  span {
    width: 33%;
    height: 14px;
    border-radius: 7px;
    background: #adadad;
  }
`;

export default App;
